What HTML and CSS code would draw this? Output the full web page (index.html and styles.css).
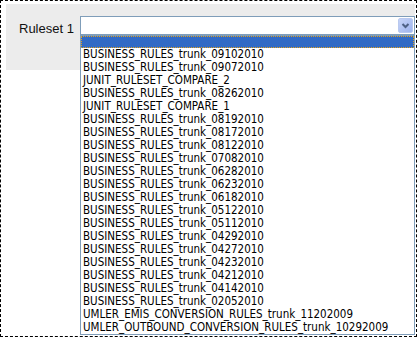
FILE: index.html
```html
<!DOCTYPE html>
<html lang="en">
<head>
    <meta charset="UTF-8">
    <title>Ruleset</title>
    <link rel="stylesheet" href="styles.css">
</head>
<body>
    <div class="frame">
        <div class="panel">
            <label class="field-label">Ruleset 1</label>
            <div class="combo">
                <div class="combo-box">
                    <span class="combo-arrow">
                        <svg width="13" height="13" viewBox="0 0 13 13">
                            <path d="M3.5 5 L6.5 8 L9.5 5" fill="none" stroke="#4d6185" stroke-width="2"/>
                        </svg>
                    </span>
                </div>

                <!-- open dropdown list -->
                <ul class="combo-list">
                    <li class="selected">&nbsp;</li>
                    <li>BUSINESS_RULES_trunk_09102010</li>
                    <li>BUSINESS_RULES_trunk_09072010</li>
                    <li>JUNIT_RULESET_COMPARE_2</li>
                    <li>BUSINESS_RULES_trunk_08262010</li>
                    <li>JUNIT_RULESET_COMPARE_1</li>
                    <li>BUSINESS_RULES_trunk_08192010</li>
                    <li>BUSINESS_RULES_trunk_08172010</li>
                    <li>BUSINESS_RULES_trunk_08122010</li>
                    <li>BUSINESS_RULES_trunk_07082010</li>
                    <li>BUSINESS_RULES_trunk_06282010</li>
                    <li>BUSINESS_RULES_trunk_06232010</li>
                    <li>BUSINESS_RULES_trunk_06182010</li>
                    <li>BUSINESS_RULES_trunk_05122010</li>
                    <li>BUSINESS_RULES_trunk_05112010</li>
                    <li>BUSINESS_RULES_trunk_04292010</li>
                    <li>BUSINESS_RULES_trunk_04272010</li>
                    <li>BUSINESS_RULES_trunk_04232010</li>
                    <li>BUSINESS_RULES_trunk_04212010</li>
                    <li>BUSINESS_RULES_trunk_04142010</li>
                    <li>BUSINESS_RULES_trunk_02052010</li>
                    <li>UMLER_EMIS_CONVERSION_RULES_trunk_11202009</li>
                    <li>UMLER_OUTBOUND_CONVERSION_RULES_trunk_10292009</li>
                </ul>
            </div>
        </div>
    </div>
</body>
</html>
```

FILE: styles.css
```css
html, body {
    margin: 0;
    background: #fff;
    overflow: hidden;
}

body {
    font-family: 'Liberation Sans', Arial, sans-serif;
    color: #000;
}

.frame {
    box-sizing: border-box;
    width: 417px;
    height: 337px;
    border: 1px dashed #000;
    padding: 3px 1px 0 5px;
    position: relative;
    overflow: hidden;
}

.panel {
    background: #ececec;
    height: 66px;
    display: flex;
    align-items: flex-start;
    padding: 12px 0 0 13px;
    box-sizing: border-box;
}

.field-label {
    font-size: 13px;
    color: #111;
    width: 61px;
    padding-top: 5px;
}

.combo {
    position: relative;
    flex: 1;
}

.combo-box {
    box-sizing: border-box;
    height: 19px;
    border: 1px solid #7f9db9;
    background: #fff;
    display: flex;
    justify-content: flex-end;
    align-items: center;
    padding-right: 1px;
}

.combo-arrow {
    width: 13px;
    height: 13px;
    background: linear-gradient(135deg, #c6d4f7, #9db3ee);
    border: 1px solid #b9c9ef;
    border-radius: 2px;
    display: flex;
}

/* Dropdown list */
.combo-list {
    position: absolute;
    top: 19px;
    left: 0;
    right: 0;
    margin: 0;
    padding: 0;
    list-style: none;
    background: #fff;
    border: 1px solid #7f9db9;
    font-family: 'DejaVu Sans Condensed', 'DejaVu Sans', sans-serif;
    font-stretch: condensed;
    font-size: 11.5px;
    z-index: 10;
}

.combo-list li {
    height: 13px;
    line-height: 13px;
    padding-left: 2px;
    white-space: nowrap;
    color: #000;
}

.combo-list li.selected {
    background: #316ac5;
    outline: 1px dotted #e0a020;
    outline-offset: -1px;
    height: 12px;
}
```
